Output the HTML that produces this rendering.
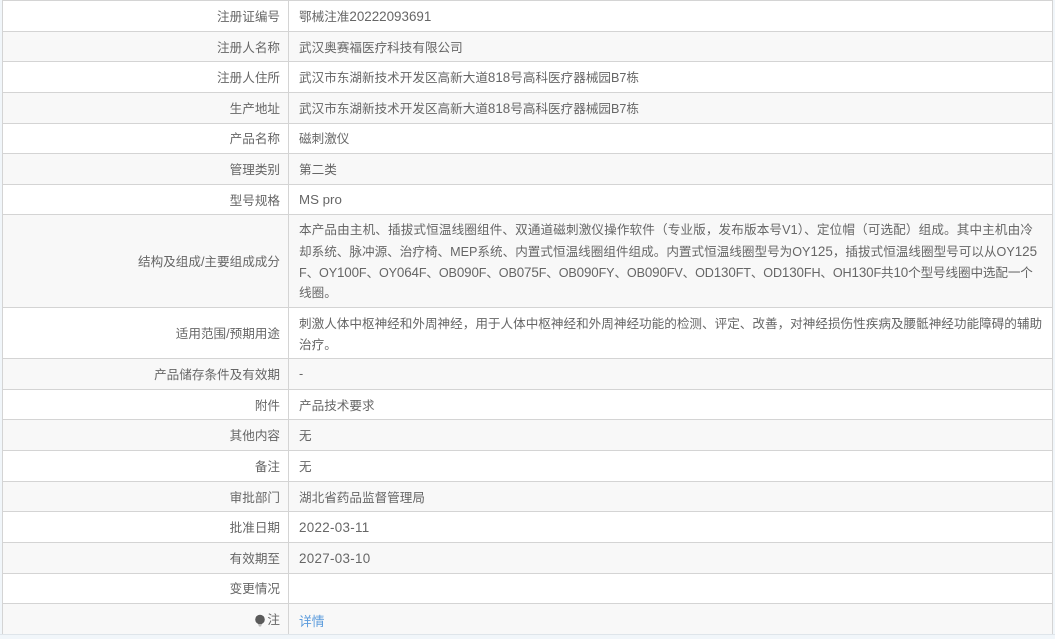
<!DOCTYPE html>
<html lang="zh">
<head>
<meta charset="utf-8">
<style>
html,body{margin:0;padding:0;width:1055px;height:639px;overflow:hidden;background:#f1f6fa}
body{position:relative;font-family:"Liberation Sans","Noto Sans CJK SC",sans-serif;font-size:12.6px;color:#666}
.r{position:absolute;left:2px;width:1051px;box-sizing:border-box;border:1px solid #d4d4d4;border-bottom:0;background:#fff}
.g{background:#f8f8f8}
.l{position:absolute;left:0;top:0;bottom:0;width:277px;padding-right:8px;padding-bottom:1px;box-sizing:content-box;border-right:1px solid #d4d4d4;display:flex;align-items:center;justify-content:flex-end;white-space:nowrap;height:auto}
.v{position:absolute;left:296px;top:0;bottom:0;padding-bottom:1px;width:748px;display:flex;align-items:center;white-space:pre}
.m{position:absolute;left:296px;white-space:nowrap;line-height:21px}
.n{font-size:13.4px}
.a{color:#5b9bdc;font-size:12.8px;position:relative;top:2px}
</style>
</head>
<body>
<div class="r" style="top:0;height:31px"><div class="l">注册证编号</div><div class="v"><span>鄂械注准<span class="n">20222093691</span></span></div></div>
<div class="r g" style="top:31px;height:30px"><div class="l">注册人名称</div><div class="v">武汉奥赛福医疗科技有限公司</div></div>
<div class="r" style="top:61px;height:31px"><div class="l">注册人住所</div><div class="v"><span>武汉市东湖新技术开发区高新大道<span class="n">818</span>号高科医疗器械园B7栋</span></div></div>
<div class="r g" style="top:92px;height:31px"><div class="l">生产地址</div><div class="v"><span>武汉市东湖新技术开发区高新大道<span class="n">818</span>号高科医疗器械园B7栋</span></div></div>
<div class="r" style="top:123px;height:30px"><div class="l" style="padding-bottom:2px">产品名称</div><div class="v" style="padding-bottom:2px">磁刺激仪</div></div>
<div class="r g" style="top:153px;height:31px"><div class="l">管理类别</div><div class="v">第二类</div></div>
<div class="r" style="top:184px;height:30px"><div class="l">型号规格</div><div class="v"><span style="font-size:13.3px">MS pro</span></div></div>
<div class="r g" style="top:214px;height:93px"><div class="l">结构及组成/主要组成成分</div>
<div class="m" style="top:5px;letter-spacing:.12px">本产品由主机、插拔式恒温线圈组件、双通道磁刺激仪操作软件（专业版，发布版本号V1）、定位帽（可选配）组成。其中主机由冷</div>
<div class="m" style="top:26px">却系统、脉冲源、治疗椅、MEP系统、内置式恒温线圈组件组成。内置式恒温线圈型号为OY<span class="n">125</span>，插拔式恒温线圈型号可以从OY<span class="n">125</span></div>
<div class="m" style="top:47px;letter-spacing:-.13px">F、OY<span class="n">100</span>F、OY<span class="n">064</span>F、OB<span class="n">090</span>F、OB<span class="n">075</span>F、OB<span class="n">090</span>FY、OB<span class="n">090</span>FV、OD<span class="n">130</span>FT、OD<span class="n">130</span>FH、OH<span class="n">130</span>F共<span class="n">10</span>个型号线圈中选配一个</div>
<div class="m" style="top:68px">线圈。</div></div>
<div class="r" style="top:307px;height:51px"><div class="l">适用范围/预期用途</div>
<div class="m" style="top:6px">刺激人体中枢神经和外周神经，用于人体中枢神经和外周神经功能的检测、评定、改善，对神经损伤性疾病及腰骶神经功能障碍的辅助</div>
<div class="m" style="top:27px">治疗。</div></div>
<div class="r g" style="top:358px;height:31px"><div class="l">产品储存条件及有效期</div><div class="v">-</div></div>
<div class="r" style="top:389px;height:30px"><div class="l">附件</div><div class="v">产品技术要求</div></div>
<div class="r g" style="top:419px;height:31px"><div class="l">其他内容</div><div class="v">无</div></div>
<div class="r" style="top:450px;height:31px"><div class="l">备注</div><div class="v">无</div></div>
<div class="r g" style="top:481px;height:30px"><div class="l">审批部门</div><div class="v">湖北省药品监督管理局</div></div>
<div class="r" style="top:511px;height:31px"><div class="l">批准日期</div><div class="v"><span class="n" style="letter-spacing:.3px;position:relative;top:1px">2022-03-11</span></div></div>
<div class="r g" style="top:542px;height:31px"><div class="l">有效期至</div><div class="v"><span class="n" style="letter-spacing:.3px;position:relative;top:1px">2027-03-10</span></div></div>
<div class="r" style="top:573px;height:30px"><div class="l" style="padding-bottom:2px">变更情况</div><div class="v"></div></div>
<div class="r g" style="top:603px;height:31px"><div class="l"><svg width="12" height="13" viewBox="0 0 12 13" style="position:relative;top:2px;left:-1px"><circle cx="6" cy="5.5" r="4.8" fill="#5a5a5a"/><path d="M4 10h4l-1 2.5H5z" fill="#bbb"/></svg>注</div><div class="v"><span class="a">详情</span></div></div>
<div style="position:absolute;left:0;top:634px;width:1055px;height:1px;background:#dfe5ea"></div>
</body>
</html>
